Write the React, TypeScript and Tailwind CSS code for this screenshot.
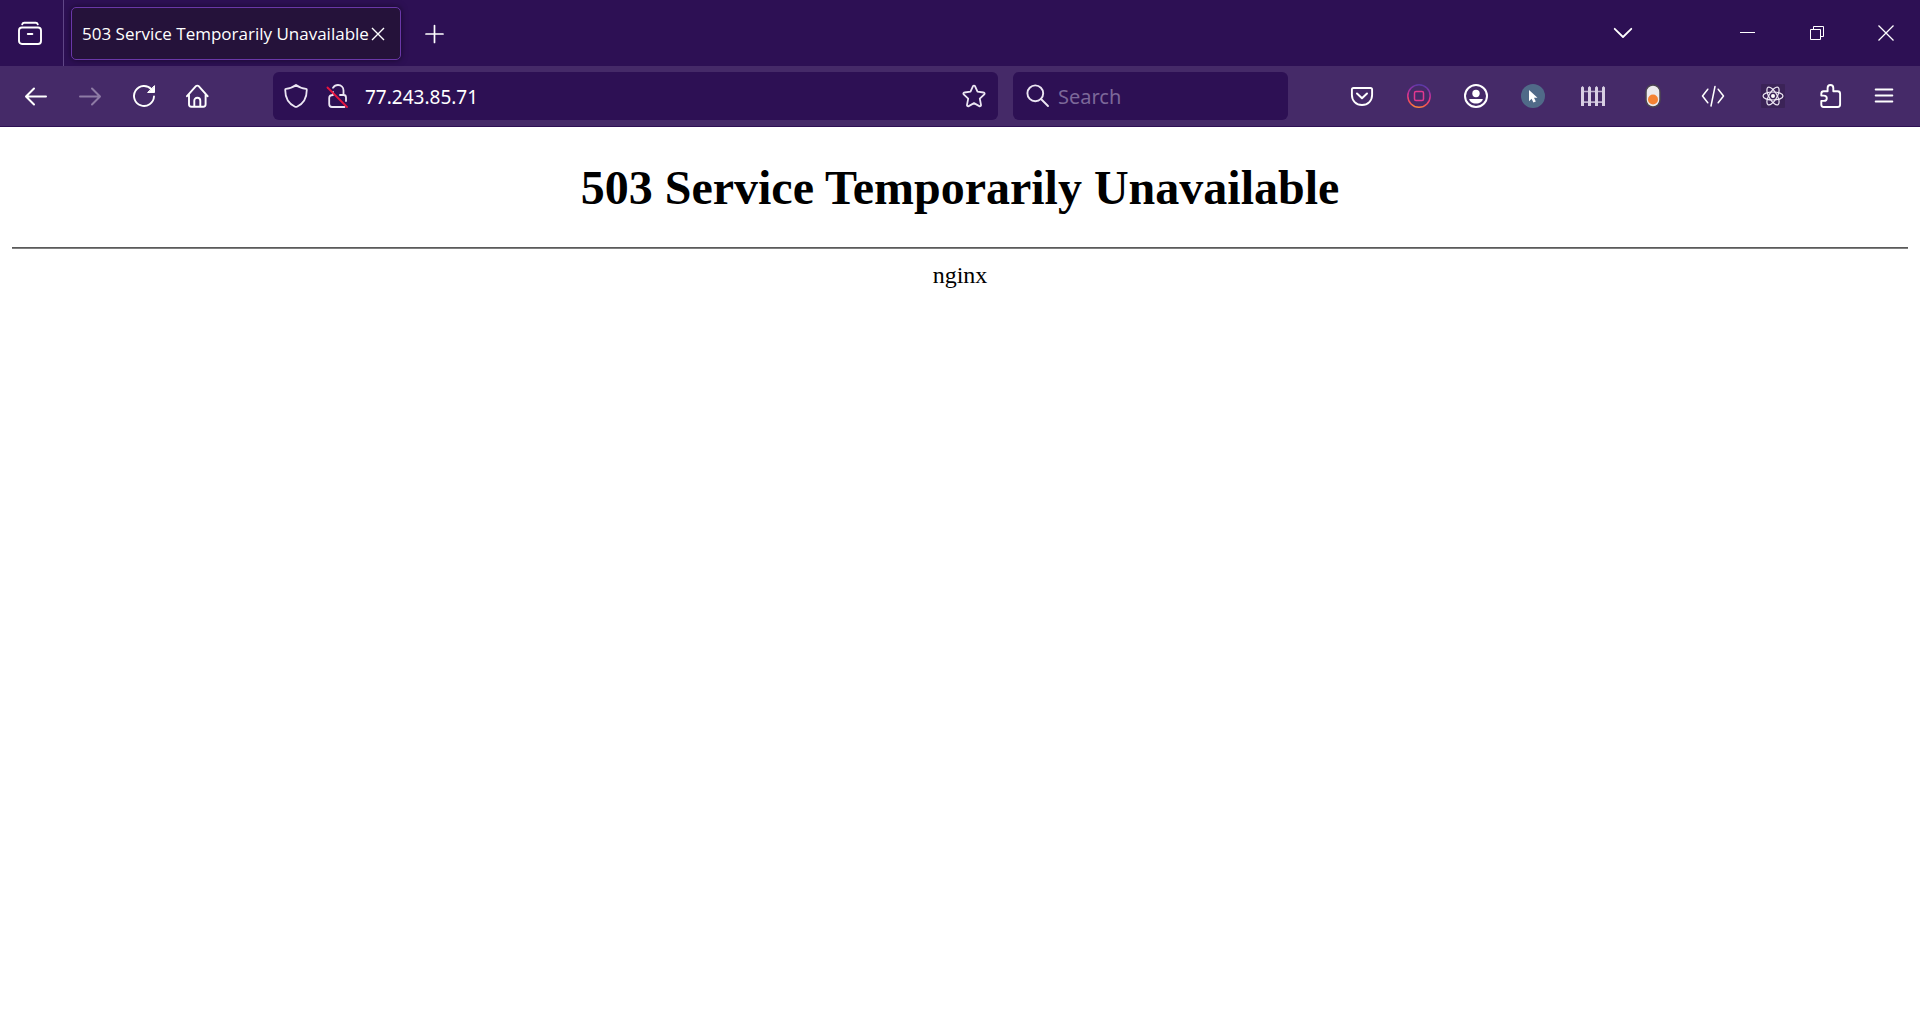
import React from "react";

const iconButton = "flex h-12 w-12 shrink-0 items-center justify-center rounded-md";

function Icon({ children }: { children: React.ReactNode }) {
  return (
    <svg width="24" height="24" viewBox="0 0 24 24" fill="none" stroke="currentColor" strokeWidth="1.9" strokeLinecap="round" strokeLinejoin="round" aria-hidden="true">
      {children}
    </svg>
  );
}

function ToolButton({ label, children, className = "" }: { label: string; children: React.ReactNode; className?: string }) {
  return (
    <button type="button" aria-label={label} className={`${iconButton} ${className}`}>
      <Icon>{children}</Icon>
    </button>
  );
}

function TitleBar() {
  return (
    <header className="flex h-[66px] items-center bg-[#2d1054] text-white">
      <div className="flex h-full w-16 shrink-0 items-center justify-center border-r border-[#604787] pr-[3px]">
        <button type="button" aria-label="View recent browsing" className="flex h-12 w-12 items-center justify-center">
          <Icon>
            <path d="M4.2 3.3c.5-1.300 1-1.500 2-1.500h11.600c1 0 1.500.2 2 1.500" />
            <rect x="1" y="6.500" width="22" height="16.500" rx="3" />
            <path d="M9.800 13h4.500" strokeWidth="2" />
          </Icon>
        </button>
      </div>
      <div className="mt-px ml-[7px] flex h-[53px] w-[330px] shrink-0 items-center rounded-[5px] border border-[#6a37a8] bg-[#25123a] pl-[10px] shadow-[0_0_6px_rgba(0,0,0,0.5)]">
        <span className="w-[284px] shrink-0 whitespace-nowrap font-['Open_Sans',sans-serif] text-[17px]">503 Service Temporarily Unavailable</span>
        <button type="button" aria-label="Close tab" className="flex h-6 w-6 shrink-0 items-center justify-center">
          <svg width="14" height="14" viewBox="0 0 14 14" stroke="currentColor" strokeWidth="1.4" aria-hidden="true">
            <path d="M1 1l12 12M13 1L1 13" />
          </svg>
        </button>
      </div>
      <ToolButton label="Open a new tab" className="ml-[9px]">
        <path d="M12.500 4.500v17M4 13h17" strokeWidth="1.700" />
      </ToolButton>
      <div className="flex-1" />
      <ToolButton label="List all tabs" className="mr-[66px]">
        <path d="M3.700 7.800l8.300 8.200 8.300-8.200" strokeWidth="1.800" />
      </ToolButton>
      <button type="button" aria-label="Minimize" className="flex h-full w-[69px] items-center justify-center">
        <svg width="15" height="15" viewBox="0 0 15 15" stroke="currentColor" aria-hidden="true">
          <path d="M0 6.500h15" />
        </svg>
      </button>
      <button type="button" aria-label="Restore" className="flex h-full w-[69px] items-center justify-center">
        <svg width="14" height="14" viewBox="0 0 14 14" stroke="currentColor" fill="none" aria-hidden="true">
          <path d="M.5 3.500h10v10H.5zM3.500 3.500v-3h10v10h-3" />
        </svg>
      </button>
      <button type="button" aria-label="Close" className="flex h-full w-[69px] items-center justify-center">
        <svg width="16" height="16" viewBox="0 0 16 16" stroke="currentColor" strokeWidth="1.300" aria-hidden="true">
          <path d="M.5.5l15 15M15.500.5l-15 15" />
        </svg>
      </button>
    </header>
  );
}

function AddressBar() {
  return (
    <div className="ml-[51px] flex h-12 min-w-0 flex-1 items-center rounded-md bg-[#2d1054] text-[#ece6f3]">
      <button type="button" aria-label="Tracking protection" className="ml-[11px] flex h-10 w-6 shrink-0 items-center justify-center">
        <Icon>
          <path d="M12 1C9.500 3 5.500 4.300 2 4.800c-.5.100-.8.500-.8 1 0 7.500 2.800 13.700 9.800 16.900.6.300 1.400.3 2 0 7-3.200 9.800-9.400 9.800-16.900 0-.5-.3-.9-.8-1C18.500 4.300 14.500 3 12 1z" strokeWidth="1.800" />
        </Icon>
      </button>
      <button type="button" aria-label="Connection is not secure" className="ml-[18px] flex h-10 w-6 shrink-0 items-center justify-center">
        <Icon>
          <path d="M7 3.800C8.200 2 9.700 1 12 1c3.300 0 5.500 2.300 5.500 5.500V11h.2c1.600 0 2.300 1 2.300 2.500V17M7 8v3c-2.600 0-3.800.8-3.800 3v6c0 1.700 1.100 3 2.800 3h12.500" strokeWidth="1.800" />
          <path d="M14 11h3.500" strokeWidth="1.800" />
          <path d="M1.500 3.500l19.500 19.500" stroke="#e8143f" strokeWidth="1.800" />
        </Icon>
      </button>
      <input aria-label="Address" defaultValue="77.243.85.71" className="ml-[15px] min-w-0 flex-1 bg-transparent pt-[2px] text-[19px] text-white outline-none" />
      <button type="button" aria-label="Bookmark this page" className="mr-3 flex h-10 w-6 shrink-0 items-center justify-center">
        <Icon>
          <path d="M11 2.200c.4-.9 1.600-.9 2 0l2.500 5.500 6.100.8c1 .1 1.400 1.200.7 1.900l-4.500 4.200 1.200 6.300c.2 1-.8 1.700-1.700 1.200L12 19.100l-5.300 3c-.9.5-1.900-.2-1.700-1.200l1.200-6.300-4.500-4.200c-.7-.7-.3-1.800.7-1.900l6.100-.8z" strokeWidth="1.800" />
        </Icon>
      </button>
    </div>
  );
}

const orbit = <ellipse cx="12" cy="12" rx="10" ry="4" />;

function Extensions() {
  return (
    <div className="ml-[50px] flex shrink-0 items-center text-white">
      <div className="flex gap-[9px]">
        <ToolButton label="Save to Pocket">
          <path d="M3.500 4h17c1 0 1.600.6 1.600 1.600V11c0 5.500-4 10-10.100 10S1.900 16.500 1.900 11V5.600C1.900 4.600 2.500 4 3.500 4z" />
          <path d="M7 9.500l5 4.700 5-4.700" strokeWidth="2" />
        </ToolButton>
        <ToolButton label="Recorder">
          <defs>
            <linearGradient id="recorder" x1="14" y1="0" x2="10" y2="24" gradientUnits="userSpaceOnUse">
              <stop offset="0" stopColor="#513aa5" />
              <stop offset=".25" stopColor="#8d31a8" />
              <stop offset=".55" stopColor="#e0338c" />
              <stop offset=".85" stopColor="#f6554d" />
              <stop offset="1" stopColor="#fb923c" />
            </linearGradient>
          </defs>
          <circle cx="12" cy="12" r="11.200" stroke="url(#recorder)" strokeWidth="1.500" />
          <rect x="7.500" y="7.500" width="9" height="9" rx="1.500" stroke="#e2388f" strokeWidth="1.500" />
        </ToolButton>
        <ToolButton label="Account">
          <circle cx="12" cy="12" r="11" strokeWidth="2" />
          <circle cx="12" cy="9.500" r="3.700" fill="currentColor" stroke="none" />
          <path d="M5.200 15h13.600c-.3 2.600-3 4.500-6.800 4.500S5.500 17.600 5.200 15z" fill="currentColor" stroke="none" />
        </ToolButton>
        <ToolButton label="Cursor tool">
          <circle cx="12" cy="12" r="12" fill="#506a88" stroke="none" />
          <path d="M8 6v11.200l2.600-2.400 1.800 3.800 2.400-1.100-1.800-3.700 3.500-.1z" fill="#fff" stroke="none" />
        </ToolButton>
      </div>
      <div className="ml-3 flex gap-3">
        <ToolButton label="Fence">
          <g fill="#d8cfe3" stroke="none">
            <path d="M0 22V3.500L1.500 2 3 3.500V22zM7 22V3.500L8.500 2 10 3.500V22zM14 22V3.500L15.500 2 17 3.500V22zM21 22V3.500L22.500 2 24 3.500V22z" />
            <path d="M0 6.700h24v1.600H0zM0 17.300h24v1.600H0z" opacity=".8" />
          </g>
        </ToolButton>
        <ToolButton label="Toggle">
          <rect x="5" y="1" width="14" height="22" rx="7" fill="#eceaed" stroke="#4b4550" strokeWidth="1.500" />
          <circle cx="12" cy="15.500" r="5" fill="#f58233" stroke="none" />
        </ToolButton>
        <ToolButton label="Source tools">
          <path d="M6.800 5.200L1.500 12l5.300 6.800M17.200 5.200l5.300 6.800-5.300 6.800M14 2.500l-4 19.500" strokeWidth="1.500" />
        </ToolButton>
        <ToolButton label="React developer tools">
          <rect width="24" height="24" rx="1" fill="#3b2357" stroke="none" />
          <g strokeWidth="1.200" stroke="#efe9f5">
            {orbit}
            <g transform="rotate(60 12 12)">{orbit}</g>
            <g transform="rotate(120 12 12)">{orbit}</g>
          </g>
          <circle cx="12" cy="12" r="2" fill="currentColor" stroke="none" />
        </ToolButton>
      </div>
      <ToolButton label="Extensions" className="ml-[10px]">
        <path d="M4.600 7.200h4V4c0-1.700 1.100-3 2.800-3s2.900 1.300 2.900 3v3.200h4.300c1.500 0 2.500 1 2.500 2.500V20.500c0 1.500-1 2.500-2.500 2.500H4.600c-1.500 0-2.300-1-2.300-2.500v-3.600h2.600c1.700 0 2.900-1.100 2.900-2.700s-1.200-2.600-2.900-2.600H2.300V9.700C2.300 8.200 3.100 7.200 4.600 7.200z" />
      </ToolButton>
      <ToolButton label="Open application menu" className="ml-[5px]">
        <path d="M3.700 5.500h16.600M3.700 11.500h16.600M3.700 17.500h16.600" strokeWidth="2" />
      </ToolButton>
    </div>
  );
}

function Toolbar() {
  return (
    <nav aria-label="Navigation" className="flex h-[61px] items-center border-b border-[#2d1054] bg-[#452a68] px-3 text-white">
      <div className="flex gap-[6px]">
        <ToolButton label="Go back">
          <path d="M22 12.500H2.500M10 4.500l-8 8 8 8" strokeWidth="2" />
        </ToolButton>
        <ToolButton label="Go forward" className="text-[#8e7ba5]">
          <path d="M2 12.500h19.500M14 4.500l8 8-8 8" strokeWidth="2" />
        </ToolButton>
        <ToolButton label="Reload">
          <path d="M19.500 5.300A10 10 0 1 0 22 12.500" />
          <path d="M22.500 2v6.500H16z" fill="currentColor" strokeWidth="1" />
        </ToolButton>
        <ToolButton label="Home">
          <path d="M1 12.200L9.900 2.200c.7-.8 2.100-.8 2.800 0l8.900 10M3 10.500v9.700c0 1.500.9 2.500 2.400 2.500h11.800c1.500 0 2.400-1 2.400-2.500v-9.700M8.300 22.500v-5.800c0-1.700 1.200-2.900 3-2.900s3 1.200 3 2.900v5.800" />
        </ToolButton>
      </div>
      <AddressBar />
      <label className="ml-[15px] flex h-12 w-[275px] shrink-0 items-center rounded-md bg-[#2d1054] pl-[13px] text-[#ece6f3]">
        <Icon>
          <circle cx="9.300" cy="9.300" r="7.900" />
          <path d="M15 15l7 7" />
        </Icon>
        <input aria-label="Search" placeholder="Search" className="ml-[8px] min-w-0 flex-1 bg-transparent pt-[2px] text-[20px] outline-none placeholder:text-[#7c6899]" />
      </label>
      <Extensions />
    </nav>
  );
}

export default function App() {
  return (
    <div className="min-h-screen bg-white font-['Noto_Sans',sans-serif]">
      <TitleBar />
      <Toolbar />
      <main className="px-3 pt-8 text-center font-['Liberation_Serif',serif] text-black">
        <h1 className="text-5xl leading-[58px] font-bold">503 Service Temporarily Unavailable</h1>
        <hr className="mt-[30px] mb-3 h-0 border-t border-b border-t-[#5a5a5a] border-b-[#808080]" />
        <p className="text-2xl leading-7">nginx</p>
      </main>
    </div>
  );
}
